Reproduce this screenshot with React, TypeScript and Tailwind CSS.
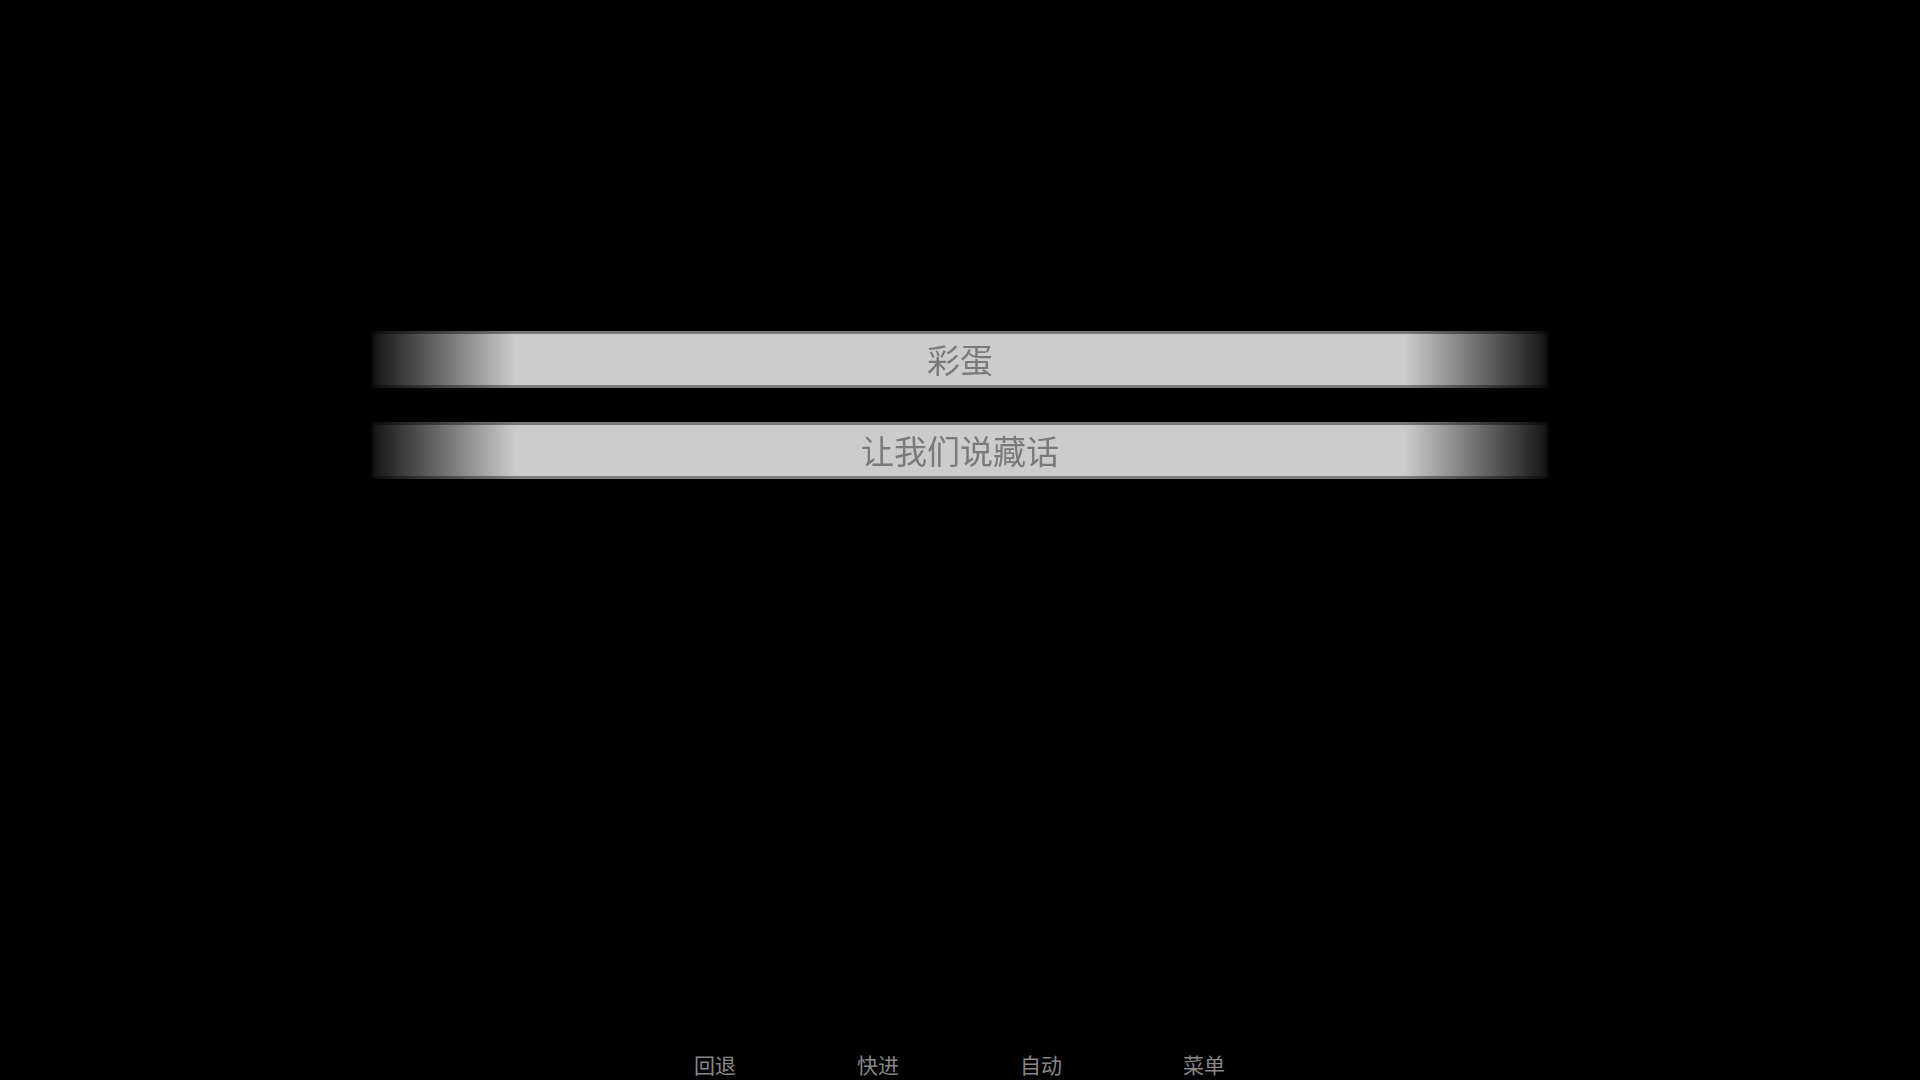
import React from "react";

const choices = ["彩蛋", "让我们说藏话"];
const quick = ["回退", "快进", "自动", "菜单"];

function ChoiceButton({ label }: { label: string }) {
  return (
    <div className="flex h-[57px] w-[1180px] items-center justify-center border-t-[3px] border-b-[3px] border-t-[#787878] border-b-[#7c7c7c] bg-[#cccccc] [mask-image:linear-gradient(to_right,transparent_0px,rgba(0,0,0,0.12)_6px,black_145px,black_1035px,rgba(0,0,0,0.12)_1174px,transparent_1180px)]">
      <span className="text-[33px] leading-none text-[#7a7a7a]">{label}</span>
    </div>
  );
}

export default function App() {
  return (
    <div
      className="flex h-[1080px] w-[1920px] flex-col overflow-hidden bg-black"
      style={{ fontFamily: '"Noto Sans CJK SC", "Noto Sans", sans-serif' }}
    >
      <div className="flex flex-col items-center gap-[34px] pt-[331px]">
        {choices.map((c) => (
          <ChoiceButton key={c} label={c} />
        ))}
      </div>
      <div className="mt-auto flex gap-[121px] pb-[5px] pl-[694px]">
        {quick.map((q) => (
          <span key={q} className="text-[21px] leading-[21px] text-[#888888]">
            {q}
          </span>
        ))}
      </div>
    </div>
  );
}
